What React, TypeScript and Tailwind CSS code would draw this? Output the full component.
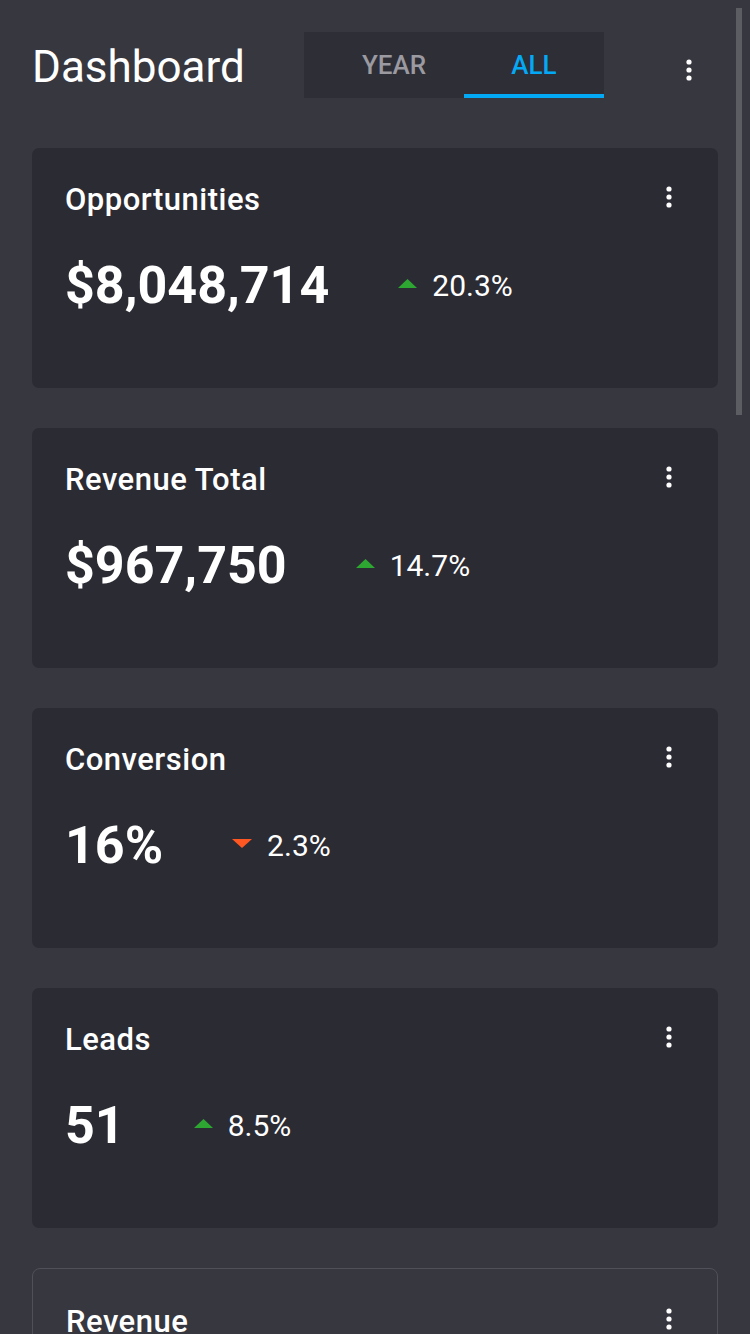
import React from "react";

const Kebab = () => (
  <svg width="8" height="24" viewBox="0 0 8 24" className="block">
    <circle cx="4" cy="4" r="2.6" fill="#ffffff" />
    <circle cx="4" cy="12" r="2.6" fill="#ffffff" />
    <circle cx="4" cy="20" r="2.6" fill="#ffffff" />
  </svg>
);

const Up = () => (
  <svg width="19" height="9" viewBox="0 0 19 9" className="block mb-[6px]">
    <polygon points="9.5,0 19,9 0,9" fill="#2ea632" />
  </svg>
);

const Down = () => (
  <svg width="20" height="9" viewBox="0 0 20 9" className="block mb-[6px]">
    <polygon points="0,0 20,0 10,9" fill="#ff5722" />
  </svg>
);

type Stat = { title: string; value: string; change: string; up: boolean };

const stats: Stat[] = [
  { title: "Opportunities", value: "$8,048,714", change: "20.3%", up: true },
  { title: "Revenue Total", value: "$967,750", change: "14.7%", up: true },
  { title: "Conversion", value: "16%", change: "2.3%", up: false },
  { title: "Leads", value: "51", change: "8.5%", up: true },
];

const StatCard = ({ s }: { s: Stat }) => (
  <div className="h-[240px] shrink-0 rounded-[7px] bg-[#2b2b34] pl-[33px] pr-[45px] pt-[36px]">
    <div className="flex items-center justify-between">
      <div className="text-[31px] font-medium leading-none tracking-[0.5px] text-white">{s.title}</div>
      <div className="mb-[6px]">
        <Kebab />
      </div>
    </div>
    <div className="mt-[45px] flex items-center">
      <div className="text-[52px] font-bold leading-none text-white">{s.value}</div>
      <div className="ml-[69px] flex items-center gap-[15px]">
        {s.up ? <Up /> : <Down />}
        <div className="text-[30px] font-normal leading-none text-white">{s.change}</div>
      </div>
    </div>
  </div>
);

export default function App() {
  return (
    <div
      className="relative h-[1334px] w-[750px] overflow-hidden bg-[#373740]"
      style={{ fontFamily: "Roboto, 'Noto Sans', sans-serif" }}
    >
      <div className="flex h-[66px] items-center pl-[32px] mt-[32px]">
        <div className="mt-[3px] w-[272px] text-[44px] font-normal leading-none text-white">Dashboard</div>
        <div className="flex h-[66px] w-[300px] bg-[#2e2e37] pl-[20px]">
          <div className="flex w-[140px] items-center justify-center text-[26px] font-medium leading-none text-[#9a9aa0]">
            YEAR
          </div>
          <div className="relative flex w-[140px] items-center justify-center text-[26px] font-medium leading-none text-[#03a9f4]">
            ALL
            <div className="absolute bottom-0 left-0 h-[4px] w-full bg-[#03a9f4]" />
          </div>
        </div>
        <div className="ml-[81px] mt-[10px]">
          <Kebab />
        </div>
      </div>

      <div className="mt-[50px] flex flex-col gap-[40px] px-[32px]">
        {stats.map((s) => (
          <StatCard key={s.title} s={s} />
        ))}
        <div className="h-[240px] shrink-0 rounded-[8px] border border-[#50505a] pl-[33px] pr-[44px] pt-[37px]">
          <div className="flex items-center justify-between">
            <div className="text-[31px] font-medium leading-none tracking-[0.5px] text-white">Revenue</div>
            <div className="mb-[6px]">
              <Kebab />
            </div>
          </div>
        </div>
      </div>

      <div className="absolute left-[736px] top-[8px] h-[407px] w-[6px] bg-[#5c5c63]" />
    </div>
  );
}
